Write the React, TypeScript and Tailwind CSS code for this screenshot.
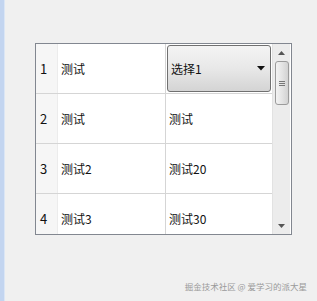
import React from 'react';

const ROWS = [
  { id: '1', name: '测试', value: null },
  { id: '2', name: '测试', value: '测试' },
  { id: '3', name: '测试2', value: '测试20' },
  { id: '4', name: '测试3', value: '测试30' },
];

const font = { fontFamily: '"Noto Sans CJK SC", "Noto Sans", sans-serif' };

const ComboCell = () => (
  <div className="h-full w-full p-px">
    <div className="h-full w-full rounded-[3px] border border-[#707070] bg-gradient-to-b from-[#f4f4f4] via-[#e8e8e8] to-[#d4d4d4] flex items-center justify-between pl-[3px] pr-[5px]">
      <span>选择1</span>
      <svg width="8" height="5" viewBox="0 0 8 5">
        <path d="M0 0 H8 L4 4.5 Z" fill="#111" />
      </svg>
    </div>
  </div>
);

const Scrollbar = () => (
  <div className="w-[18px] h-full bg-[#ececec] border-l border-[#e2e2e2] flex flex-col items-center">
    <div className="h-[17px] flex items-center justify-center">
      <svg width="7" height="4" viewBox="0 0 7 4">
        <path d="M0 4 L3.5 0 L7 4 Z" fill="#555" />
      </svg>
    </div>
    <div className="w-[14px] h-[44px] rounded-[3px] border border-[#9b9b9b] bg-gradient-to-r from-[#f3f3f3] via-[#e4e4e4] to-[#d2d2d2] flex flex-col items-center justify-center gap-[1px]">
      <div className="w-[6px] h-px bg-[#777]" />
      <div className="w-[6px] h-px bg-[#777]" />
      <div className="w-[6px] h-px bg-[#777]" />
    </div>
    <div className="flex-1" />
    <div className="h-[17px] flex items-center justify-center">
      <svg width="7" height="4" viewBox="0 0 7 4">
        <path d="M0 0 L7 0 L3.5 4 Z" fill="#555" />
      </svg>
    </div>
  </div>
);

export default function App() {
  return (
    <div className="w-[317px] h-[301px] bg-[#f0f0f0] flex overflow-hidden text-[12px] text-[#111]" style={font}>
      <div className="w-[5px] h-full bg-[#c3d5f0] border-r border-[#dbe6f5]" />
      <div className="flex-1 flex flex-col">
        <div className="pt-[43px] pl-[30px]">
          <div className="w-[257px] h-[192px] border border-[#828790] bg-white flex overflow-hidden">
            <div className="w-[236px] flex flex-col">
              {ROWS.map((r) => (
                <div key={r.id} className="h-[50px] shrink-0 flex border-b border-[#d5d5d5]">
                  <div className="w-[22px] shrink-0 bg-[#f6f6f6] border-r border-[#ececec] flex items-center pl-[4px] text-[13px]">
                    {r.id}
                  </div>
                  <div className="w-[108px] shrink-0 border-r border-[#d5d5d5] flex items-center pl-[3px]">
                    {r.name}
                  </div>
                  <div className="flex-1 flex items-center">
                    {r.value === null ? <ComboCell /> : <span className="pl-[3px]">{r.value}</span>}
                  </div>
                </div>
              ))}
            </div>
            <Scrollbar />
          </div>
        </div>
        <div className="flex-1 flex items-end justify-end pr-[10px] pb-[8px]">
          <span className="text-[8.5px] text-[#9a9a9a]">掘金技术社区 @ 爱学习的派大星</span>
        </div>
      </div>
    </div>
  );
}
